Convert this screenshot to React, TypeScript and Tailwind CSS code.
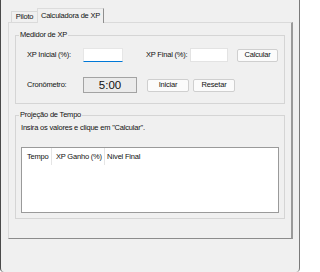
export default function App() {
  return (
    <div className="w-[300px] h-[272px] bg-[#f0f0f0] border-l border-r border-l-[#4a4a4a] border-r-[#7a7a7a] rounded-b-[4px] pt-[8px] font-['Liberation_Sans',Arial,sans-serif] text-[7.5px] leading-[10px] tracking-[-0.2px] text-[#111]">
      <div className="ml-[7px] w-[285px]">
        {/* tabs */}
        <div className="flex items-end h-[14px] pl-[3px]">
          <div className="h-[11px] w-[26px] flex items-center justify-center border-t border-l border-[#d9d9d9]">
            Piloto
          </div>
          <div className="relative z-10 self-start h-[15px] w-[67px] flex items-center justify-center bg-[#f0f0f0] border-t border-l border-[#dcdcdc] border-r border-r-[#8f8f8f]">
            Calculadora de XP
          </div>
        </div>

        {/* tab page */}
        <div className="h-[217px] border-t border-l border-[#dadada] border-r-2 border-r-[#9a9a9a] border-b border-b-[#8c8c8c] pt-[7px] pl-[6px]">
          <fieldset className="w-[270px] border border-[#d5d5d5]">
            <legend className="ml-[3px] px-[1px] leading-[10px]">Medidor de XP</legend>
            <div className="pl-[11px] pt-[8px] pb-[10px]">
              <div className="flex items-center h-[14px]">
                <span className="w-[56px]">XP Inicial (%):</span>
                <div className="w-[40px] h-[14px] bg-white border border-[#e6e6e6] border-b-[#0078d7]" />
                <span className="ml-[23px] w-[44px]">XP Final (%):</span>
                <div className="w-[38px] h-[14px] bg-white border border-[#e3e3e3]" />
                <button className="ml-[9px] w-[41px] h-[13px] flex items-center justify-center bg-[#fbfbfb] border border-[#cfcfcf] rounded-[2px]">
                  Calcular
                </button>
              </div>
              <div className="flex items-center h-[16px] mt-[15px]">
                <span className="w-[56px]">Cronômetro:</span>
                <div className="w-[54px] h-[16px] flex items-center justify-center bg-[#ebebeb] border border-[#a3a3a3] text-[11.5px] tracking-normal">
                  5:00
                </div>
                <button className="ml-[10px] w-[42px] h-[13px] flex items-center justify-center bg-[#fbfbfb] border border-[#cfcfcf] rounded-[2px]">
                  Iniciar
                </button>
                <button className="ml-[4px] w-[42px] h-[13px] flex items-center justify-center bg-[#fbfbfb] border border-[#cfcfcf] rounded-[2px]">
                  Resetar
                </button>
              </div>
            </div>
          </fieldset>

          <fieldset className="mt-[6px] w-[270px] border border-[#d5d5d5]">
            <legend className="ml-[3px] px-[1px] leading-[10px]">Projeção de Tempo</legend>
            <div className="px-[5px] pb-[5px]">
              <p className="mt-[3px] h-[10px]">Insira os valores e clique em "Calcular".</p>
              <div className="mt-[14px] h-[66px] bg-white border border-[#9a9a9a]">
                <div className="flex h-[17px]">
                  <div className="w-[30px] flex items-center pl-[5px] border-r border-[#e5e5e5]">Tempo</div>
                  <div className="w-[53px] flex items-center pl-[4px] border-r border-[#e5e5e5]">XP Ganho (%)</div>
                  <div className="flex items-center pl-[2px]">Nível Final</div>
                </div>
              </div>
            </div>
          </fieldset>
        </div>
      </div>
    </div>
  );
}
